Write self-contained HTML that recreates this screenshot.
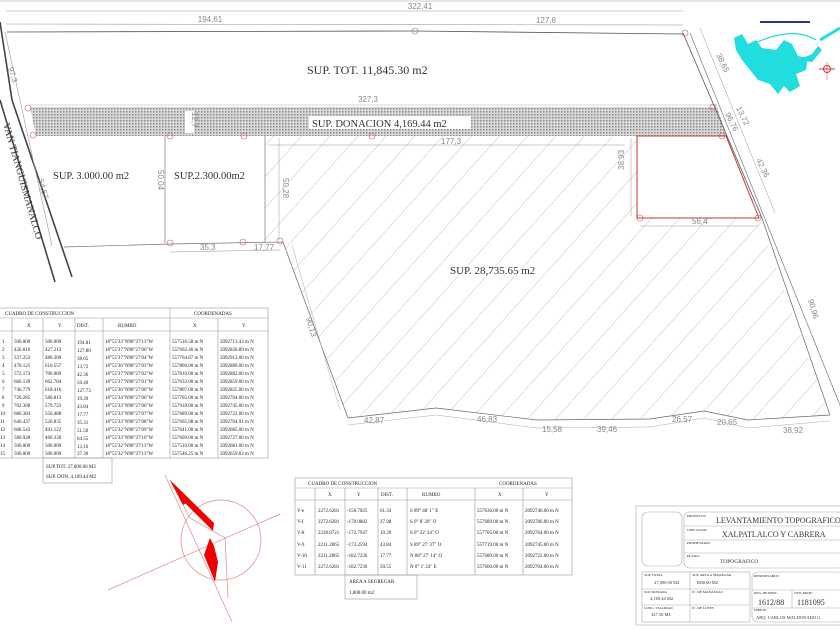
<!DOCTYPE html>
<html><head><meta charset="utf-8"><style>
html,body{margin:0;padding:0;background:#fff;width:840px;height:630px;overflow:hidden}
svg{display:block}
.s{font-family:"Liberation Serif",serif;fill:#333}
.d{font-family:"Liberation Sans",sans-serif;fill:#888;font-size:8px}
.t{font-family:"Liberation Serif",serif;fill:#222;font-size:5px}
</style></head><body>
<svg width="840" height="630" viewBox="0 0 840 630" xmlns="http://www.w3.org/2000/svg">
<defs>
<pattern id="dots" width="3" height="3" patternUnits="userSpaceOnUse">
<rect width="3" height="3" fill="#d8d8d8"/><rect width="1.5" height="1.5" fill="#8a8a8a"/>
</pattern>
<pattern id="hatch" width="21" height="21" patternUnits="userSpaceOnUse" patternTransform="rotate(-48)">
<line x1="0" y1="0" x2="21" y2="0" stroke="#c4c4c4" stroke-width="0.9"/>
</pattern>
</defs>
<line x1="0" y1="1" x2="840" y2="1" stroke="#ccc"/>
<line x1="6" y1="11" x2="683" y2="11" stroke="#999" stroke-width="0.6"/>
<text class="d" x="420" y="9" text-anchor="middle">322,41</text>
<line x1="6" y1="24" x2="683" y2="25" stroke="#999" stroke-width="0.6"/>
<text class="d" x="210" y="22" text-anchor="middle">194,61</text>
<text class="d" x="546" y="23" text-anchor="middle">127,8</text>
<polyline points="7,32 415,31 683,34" fill="none" stroke="#555" stroke-width="0.8"/>
<circle cx="415" cy="31" r="3" fill="none" stroke="#c66" stroke-width="0.6"/>
<circle cx="685" cy="33" r="3" fill="none" stroke="#c66" stroke-width="0.6"/>
<line x1="12" y1="100" x2="72" y2="277" stroke="#444" stroke-width="1.6"/>
<line x1="0" y1="22" x2="12" y2="100" stroke="#444" stroke-width="1.6"/>
<line x1="0" y1="100" x2="55" y2="282" stroke="#444" stroke-width="1.6"/>
<line x1="5" y1="32" x2="52" y2="246" stroke="#999" stroke-width="0.6"/>
<text class="s" font-size="10" transform="translate(3,124) rotate(74)">VAN  TIANGUISMANALCO</text>
<text class="d" transform="translate(8,68) rotate(74)">97,3</text>
<text class="d" transform="translate(38,180) rotate(74)">54,57</text>
<polygon points="30,107 717,107 727,136 36,136" fill="url(#dots)"/>
<line x1="30" y1="105" x2="717" y2="105" stroke="#aaa" stroke-width="0.5"/>
<text class="d" x="368" y="102" text-anchor="middle">327,3</text>
<rect x="309" y="116" width="162" height="13" fill="#fff"/>
<text class="s" font-size="10.5" x="312" y="127">SUP.  DONACION  4,169.44  m2</text>
<rect x="185" y="111" width="9" height="22" fill="#fff"/>
<text class="d" font-size="7" transform="translate(192,112) rotate(90)">12,7</text>
<text class="s" x="307" y="74" font-size="12">SUP.  TOT.  11,845.30  m2</text>
<path fill-rule="evenodd" fill="url(#hatch)" d="M265,136 L727,136 L762,218 L780,280 L830,415 L748,420 L704,411 L650,419 L537,420 L436,408 L348,418 L283,242 L265,242 Z M637,136 L726,136 L759,218 L637,218 Z"/>
<polyline points="283,242 348,418 436,408 537,420 650,419 704,411 748,420 830,415" fill="none" stroke="#666" stroke-width="0.7"/>
<line x1="292" y1="245" x2="340" y2="410" stroke="#aaa" stroke-width="0.5"/>
<polyline points="348,425 436,415 537,428 650,427 704,418 748,428 830,421" fill="none" stroke="#aaa" stroke-width="0.5"/>
<text class="d" x="364" y="423">42,87</text><text class="d" x="477" y="422">46,83</text>
<text class="d" x="542" y="432">15,58</text><text class="d" x="597" y="432">39,46</text>
<text class="d" x="672" y="422">26,57</text><text class="d" x="717" y="425">20,65</text>
<text class="d" x="783" y="433">38,92</text>
<text class="d" transform="translate(306,318) rotate(74)">90,13</text>
<text class="d" transform="translate(808,300) rotate(74)">90,96</text>
<line x1="683" y1="33" x2="762" y2="218" stroke="#555" stroke-width="0.8"/>
<line x1="690" y1="33" x2="842" y2="410" stroke="#666" stroke-width="0.6"/>
<line x1="762" y1="218" x2="830" y2="415" stroke="#666" stroke-width="0.7"/>
<line x1="700" y1="28" x2="775" y2="213" stroke="#999" stroke-width="0.5"/>
<text class="d" transform="translate(716,55) rotate(64)">38,65</text>
<text class="d" transform="translate(736,108) rotate(64)">13,72</text>
<text class="d" transform="translate(725,114) rotate(64)">96,76</text>
<text class="d" transform="translate(756,160) rotate(64)">42,36</text>
<polygon points="637,136 726,136 759,218 637,218" fill="none" stroke="#c33" stroke-width="1"/>
<line x1="631" y1="138" x2="631" y2="216" stroke="#999" stroke-width="0.5"/>
<text class="d" transform="translate(624,170) rotate(-90)">38,93</text>
<line x1="640" y1="226" x2="759" y2="226" stroke="#999" stroke-width="0.5"/>
<text class="d" x="692" y="224">56,4</text>
<line x1="268" y1="145" x2="625" y2="145" stroke="#999" stroke-width="0.5"/>
<text class="d" x="441" y="144">177,3</text>
<text class="s" x="450" y="274" font-size="11">SUP.  28,735.65  m2</text>
<line x1="165" y1="136" x2="165" y2="243" stroke="#777" stroke-width="0.7"/>
<line x1="265" y1="136" x2="265" y2="242" stroke="#777" stroke-width="0.7"/>
<line x1="279" y1="138" x2="279" y2="240" stroke="#999" stroke-width="0.5"/>
<polyline points="64,247 170,244 283,242" fill="none" stroke="#777" stroke-width="0.7"/>
<line x1="170" y1="252" x2="280" y2="250" stroke="#999" stroke-width="0.5"/>
<text class="d" x="200" y="250">35,3</text><text class="d" x="254" y="250">17,77</text>
<text class="d" transform="translate(158,170) rotate(90)">50,04</text>
<text class="d" transform="translate(283,178) rotate(90)">50,28</text>
<text class="s" x="53" y="179" font-size="10.5">SUP.  3.000.00    m2</text>
<text class="s" x="174" y="179" font-size="10.5">SUP.2.300.00m2</text>
<g fill="none" stroke="#c66" stroke-width="0.6">
<circle cx="170" cy="243" r="3"/><circle cx="243" cy="242" r="3"/><circle cx="280" cy="241" r="3"/>
<circle cx="170" cy="136" r="3"/><circle cx="244" cy="136" r="3"/><circle cx="372" cy="136" r="3"/>
<circle cx="33" cy="135" r="3"/><circle cx="28" cy="108" r="3"/><circle cx="640" cy="218" r="3"/>
<circle cx="758" cy="218" r="3"/><circle cx="722" cy="136" r="3"/><circle cx="713" cy="107" r="3"/>
</g>
<!-- map -->
<rect x="760" y="21" width="50" height="2" fill="#2233aa"/>
<path d="M745,48 Q790,24 816,40" fill="none" stroke="#22dddd" stroke-width="1.2"/>
<path d="M820,40 L840,28" fill="none" stroke="#22dddd" stroke-width="3"/>
<path d="M734,38 L742,34 L748,44 L756,40 L762,48 L776,50 L784,40 L792,44 L798,56 L808,58 L806,70 L796,74 L800,86 L790,92 L784,86 L778,94 L770,84 L758,80 L750,70 L742,60 L736,50 Z" fill="#22dddd"/>
<path d="M798,60 L812,54 L818,46 L822,50 L812,62 Z" fill="#22dddd"/>
<circle cx="827" cy="69" r="3.5" fill="none" stroke="#d33"/><line x1="819" y1="69" x2="835" y2="69" stroke="#d33"/><line x1="827" y1="62" x2="827" y2="80" stroke="#d33" stroke-width="0.5"/>
<!-- table1 -->
<g stroke="#999" stroke-width="0.6" fill="none">
<rect x="-1" y="308" width="269" height="150"/>
<line x1="0" y1="318" x2="268" y2="318"/><line x1="0" y1="331" x2="268" y2="331"/>
<line x1="12" y1="318" x2="12" y2="458"/><line x1="43" y1="318" x2="43" y2="458"/>
<line x1="75" y1="318" x2="75" y2="458"/><line x1="103" y1="318" x2="103" y2="458"/>
<line x1="170" y1="308" x2="170" y2="458"/><line x1="218" y1="318" x2="218" y2="458"/>
<rect x="43" y="458" width="69" height="25"/>
</g>
<g class="t">
<text x="5" y="315">CUADRO  DE  CONSTRUCCION</text><text x="194" y="315">COORDENADAS</text>
<text x="27" y="327">X</text><text x="58" y="327">Y</text><text x="77" y="327">DIST.</text><text x="118" y="327">RUMBO</text><text x="193" y="327">X</text><text x="242" y="327">Y</text>
<text x="2" y="343">1</text><text x="14" y="343">500.000</text><text x="45" y="343">500.000</text><text x="77" y="344">194.81</text><text x="105" y="343">18°55'33"N98°27'13"W</text><text x="172" y="343">557516.58 m N</text><text x="220" y="343">2092713.43 m N</text>
<text x="2" y="351">2</text><text x="14" y="351">426.616</text><text x="45" y="351">427.212</text><text x="77" y="352">127.80</text><text x="105" y="351">18°55'37"N98°27'06"W</text><text x="172" y="351">557662.46 m N</text><text x="220" y="351">2092826.89 m N</text>
<text x="2" y="359">3</text><text x="14" y="359">337.253</text><text x="45" y="359">480.309</text><text x="77" y="360">38.65</text><text x="105" y="359">18°55'37"N98°27'04"W</text><text x="172" y="359">557764.67 m N</text><text x="220" y="359">2092912.00 m N</text>
<text x="2" y="367">4</text><text x="14" y="367">478.125</text><text x="45" y="367">616.557</text><text x="77" y="368">13.72</text><text x="105" y="367">18°55'36"N98°27'03"W</text><text x="172" y="367">557806.00 m N</text><text x="220" y="367">2092889.00 m N</text>
<text x="2" y="375">5</text><text x="14" y="375">572.173</text><text x="45" y="375">700.089</text><text x="77" y="376">42.36</text><text x="105" y="375">18°55'37"N98°27'02"W</text><text x="172" y="375">557816.00 m N</text><text x="220" y="375">2092882.00 m N</text>
<text x="2" y="383">6</text><text x="14" y="383">660.139</text><text x="45" y="383">662.784</text><text x="77" y="384">56.40</text><text x="105" y="383">18°55'37"N98°27'01"W</text><text x="172" y="383">557632.00 m N</text><text x="220" y="383">2092859.00 m N</text>
<text x="2" y="391">7</text><text x="14" y="391">746.779</text><text x="45" y="391">618.416</text><text x="77" y="392">127.73</text><text x="105" y="391">18°55'36"N98°27'00"W</text><text x="172" y="391">557807.00 m N</text><text x="220" y="391">2092825.00 m N</text>
<text x="2" y="399">8</text><text x="14" y="399">720.285</text><text x="45" y="399">580.813</text><text x="77" y="400">19.39</text><text x="105" y="399">18°55'34"N98°27'06"W</text><text x="172" y="399">557705.00 m N</text><text x="220" y="399">2092764.00 m N</text>
<text x="2" y="407">9</text><text x="14" y="407">702.368</text><text x="45" y="407">579.723</text><text x="77" y="408">43.84</text><text x="105" y="407">18°55'33"N98°27'06"W</text><text x="172" y="407">557918.00 m N</text><text x="220" y="407">2092745.00 m N</text>
<text x="0" y="415">10</text><text x="14" y="415">686.384</text><text x="45" y="415">556.488</text><text x="77" y="416">17.77</text><text x="105" y="415">18°55'33"N98°27'07"W</text><text x="172" y="415">557689.00 m N</text><text x="220" y="415">2092722.00 m N</text>
<text x="0" y="423">11</text><text x="14" y="423">646.437</text><text x="45" y="423">520.835</text><text x="77" y="424">35.31</text><text x="105" y="423">18°55'33"N98°27'08"W</text><text x="172" y="423">557665.98 m N</text><text x="220" y="423">2092704.91 m N</text>
<text x="0" y="431">12</text><text x="14" y="431">608.543</text><text x="45" y="431">493.122</text><text x="77" y="432">51.50</text><text x="105" y="431">18°55'32"N98°27'09"W</text><text x="172" y="431">557641.00 m N</text><text x="220" y="431">2092685.00 m N</text>
<text x="0" y="439">13</text><text x="14" y="439">580.928</text><text x="45" y="439">460.330</text><text x="77" y="440">64.55</text><text x="105" y="439">18°55'33"N98°27'10"W</text><text x="172" y="439">557609.00 m N</text><text x="220" y="439">2092727.00 m N</text>
<text x="0" y="447">14</text><text x="14" y="447">500.000</text><text x="45" y="447">500.000</text><text x="77" y="448">13.16</text><text x="105" y="447">18°55'32"N98°27'13"W</text><text x="172" y="447">557516.00 m N</text><text x="220" y="447">2092681.00 m N</text>
<text x="0" y="455">15</text><text x="14" y="455">500.000</text><text x="45" y="455">500.000</text><text x="77" y="455">37.30</text><text x="105" y="455">18°55'32"N98°27'13"W</text><text x="172" y="455">557546.25 m N</text><text x="220" y="455">2092659.82 m N</text>
<text x="46" y="468">SUP.TOT.    27,000.00 M2</text><text x="46" y="478">SUP.  DON.   4,169.44  M2</text>
</g>
<g stroke="#d88" stroke-width="0.7" fill="none">
<circle cx="221" cy="540" r="40"/>
<line x1="108" y1="590" x2="280" y2="514"/>
<line x1="165" y1="475" x2="232" y2="622"/>
<polyline points="170,480 190,518 225,538 228,598"/>
</g>
<polygon points="170,480 214,523 213,531 182,500 186,503 183,505" fill="#e00"/>
<polygon points="205,528 214,546 218,562 215,582 204,555 210,538" fill="#e00"/>
<g stroke="#999" stroke-width="0.6" fill="none">
<rect x="295" y="478" width="277" height="97"/>
<line x1="295" y1="488" x2="572" y2="488"/><line x1="295" y1="500" x2="572" y2="500"/>
<line x1="315" y1="488" x2="315" y2="575"/><line x1="345" y1="488" x2="345" y2="575"/>
<line x1="378" y1="488" x2="378" y2="575"/><line x1="407" y1="488" x2="407" y2="575"/>
<line x1="475" y1="488" x2="475" y2="575"/><line x1="523" y1="488" x2="523" y2="575"/>
<rect x="345" y="575" width="72" height="24"/>
</g>
<g class="t">
<text x="308" y="485">CUADRO  DE  CONSTRUCCION</text><text x="499" y="485">COORDENADAS</text>
<text x="328" y="496">X</text><text x="357" y="496">Y</text><text x="381" y="496">DIST.</text><text x="422" y="496">RUMBO</text><text x="498" y="496">X</text><text x="545" y="496">Y</text>
<text x="297" y="512">V-e</text><text x="318" y="512">2272.6281</text><text x="347" y="512">-150.7025</text><text x="380" y="512">61.34</text><text x="410" y="512">S 89° 48' 1" E</text><text x="477" y="512">557636.00 m N</text><text x="525" y="512">2092746.00 m N</text>
<text x="297" y="523">V-f</text><text x="318" y="523">2272.6281</text><text x="347" y="523">-170.0882</text><text x="380" y="523">27.98</text><text x="410" y="523">S 0° 8' 20" O</text><text x="477" y="523">557689.00 m N</text><text x="525" y="523">2092786.00 m N</text>
<text x="297" y="534">V-8</text><text x="318" y="534">2238.8721</text><text x="347" y="534">-172.7947</text><text x="380" y="534">19.39</text><text x="410" y="534">S 0° 22' 34" O</text><text x="477" y="534">557705.00 m N</text><text x="525" y="534">2092764.00 m N</text>
<text x="297" y="546">V-9</text><text x="318" y="546">2211.2865</text><text x="347" y="546">-173.2594</text><text x="380" y="546">43.84</text><text x="410" y="546">S 89° 27' 37" O</text><text x="477" y="546">557719.00 m N</text><text x="525" y="546">2092745.00 m N</text>
<text x="297" y="557">V-10</text><text x="318" y="557">2211.2865</text><text x="347" y="557">-182.7236</text><text x="380" y="557">17.77</text><text x="410" y="557">N 88° 27' 14" O</text><text x="477" y="557">557689.00 m N</text><text x="525" y="557">2092722.00 m N</text>
<text x="297" y="568">V-11</text><text x="318" y="568">2272.6281</text><text x="347" y="568">-182.7236</text><text x="380" y="568">50.55</text><text x="410" y="568">N 0° 1' 24" E</text><text x="477" y="568">557660.00 m N</text><text x="525" y="568">2092704.00 m N</text>
<text x="349" y="583">AREA A SEGREGAR</text><text x="349" y="594">1,800.00 m2</text>
</g>
<g stroke="#aaa" stroke-width="0.6" fill="none">
<rect x="636" y="506" width="210" height="119"/>
<rect x="642" y="512" width="40" height="54" rx="6"/>
<rect x="684" y="512" width="160" height="56" rx="6"/>
<line x1="684" y1="526" x2="840" y2="526"/><line x1="684" y1="540" x2="840" y2="540"/><line x1="684" y1="553" x2="840" y2="553"/>
<rect x="642" y="572" width="108" height="50"/>
<line x1="690" y1="572" x2="690" y2="622"/><line x1="642" y1="589" x2="750" y2="589"/><line x1="642" y1="605" x2="750" y2="605"/>
<rect x="752" y="572" width="92" height="50" rx="6"/>
<line x1="752" y1="590" x2="840" y2="590"/><line x1="792" y1="590" x2="792" y2="608"/><line x1="752" y1="608" x2="840" y2="608"/>
</g>
<g class="t">
<text x="687" y="517" font-size="3.5">PROYECTO:</text><text x="687" y="531" font-size="3.5">UBICACION:</text><text x="687" y="544" font-size="3.5">PROPIETARIO:</text><text x="687" y="557" font-size="3.5">PLANO:</text>
<text x="644" y="576" font-size="3.5">SUP. TOTAL</text><text x="692" y="576" font-size="3.5">SUP. AREA A SEGREGAR</text><text x="644" y="593" font-size="3.5">SUP. DONADA</text><text x="692" y="593" font-size="3.5">Nº. DE MANZANAS</text><text x="644" y="609" font-size="3.5">LONG. VIALIDAD</text><text x="692" y="609" font-size="3.5">Nº. DE LOTES</text>
<text x="754" y="577" font-size="3.5">RESPONSABLE:</text><text x="754" y="594" font-size="3.5">REG. DE PERI.:</text><text x="794" y="594" font-size="3.5">CED. PROF.:</text><text x="754" y="611" font-size="3.5">DIRIGE:</text>
</g>
<g class="s">
<text x="716" y="523" font-size="8">LEVANTAMIENTO TOPOGRAFICO</text>
<text x="722" y="537" font-size="8">XALPATLALCO  Y  CABRERA</text>
<text x="720" y="563" font-size="5.5">TOPOGRAFICO</text>
<text x="654" y="584" font-size="4.5">27,000.00 M2</text><text x="696" y="584" font-size="4.5">1800.00 M2</text>
<text x="650" y="600" font-size="4.5">4,169.44 M2</text><text x="651" y="616" font-size="4.5">327.30 ML</text>
<text x="758" y="605" font-size="8">1612/88</text><text x="797" y="605" font-size="8">1181095</text>
<text x="756" y="619" font-size="4.5">ARQ. CARLOS MALDONADO G.</text>
</g>
</svg>
</body></html>
